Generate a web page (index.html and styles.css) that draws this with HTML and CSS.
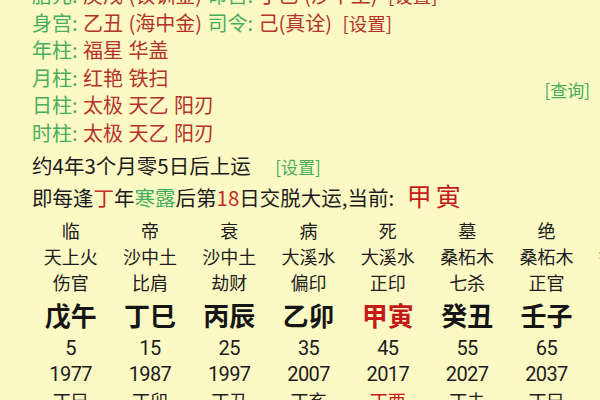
FILE: index.html
```html
<!DOCTYPE html>
<html lang="zh-CN">
<head>
<meta charset="utf-8">
<link rel="stylesheet" href="styles.css">
</head>
<body>
<div class="page">
  <section class="info">
    <div class="info-lines">
      <div class="line"><span class="lbl">胎元:</span> <span class="val">庚戌 (钗钏金)</span> <span class="lbl">命宫:</span> <span class="val">丁巳 (沙中土)</span> <span class="val set">[设置]</span></div>
      <div class="line"><span class="lbl">身宫:</span> <span class="val">乙丑 (海中金)</span> <span class="lbl">司令:</span> <span class="val">己(真诠)</span> <span class="val set">[设置]</span></div>
      <div class="line"><span class="lbl">年柱:</span> <span class="val">福星 华盖</span></div>
      <div class="line"><span class="lbl">月柱:</span> <span class="val">红艳 铁扫</span></div>
      <div class="line"><span class="lbl">日柱:</span> <span class="val">太极 天乙 阳刃</span></div>
      <div class="line"><span class="lbl">时柱:</span> <span class="val">太极 天乙 阳刃</span></div>
    </div>
    <div class="query">[查询]</div>
  </section>

  <section class="luck">
    <div class="lline">约4年3个月零5日后上运 <span class="gset">[设置]</span></div>
    <div class="lline">即每逢<span class="red">丁</span>年<span class="grn">寒露</span>后第<span class="red">18</span>日交脱大运,当前: <span class="cur">甲寅</span></div>
  </section>

  <section class="grid">
    <div>临</div><div>帝</div><div>衰</div><div>病</div><div>死</div><div>墓</div><div>绝</div><div>胎</div>
    <div>天上火</div><div>沙中土</div><div>沙中土</div><div>大溪水</div><div>大溪水</div><div>桑柘木</div><div>桑柘木</div><div>钗钏金</div>
    <div>伤官</div><div>比肩</div><div>劫财</div><div>偏印</div><div>正印</div><div>七杀</div><div>正官</div><div>偏财</div>
    <div class="gz">戊午</div><div class="gz">丁巳</div><div class="gz">丙辰</div><div class="gz">乙卯</div><div class="gz hot">甲寅</div><div class="gz">癸丑</div><div class="gz">壬子</div><div class="gz">辛亥</div>
    <div class="num">5</div><div class="num">15</div><div class="num">25</div><div class="num">35</div><div class="num">45</div><div class="num">55</div><div class="num">65</div><div class="num">75</div>
    <div class="num">1977</div><div class="num">1987</div><div class="num">1997</div><div class="num">2007</div><div class="num">2017</div><div class="num">2027</div><div class="num">2037</div><div class="num">2047</div>
    <div>丁巳</div><div>丁卯</div><div>丁丑</div><div>丁亥</div><div class="hot">丁酉</div><div>丁未</div><div>丁巳</div><div>丁卯</div>
  </section>
</div>
</body>
</html>
```

FILE: styles.css
```css
html, body {
  margin: 0;
  padding: 0;
}
body {
  width: 600px;
  height: 400px;
  overflow: hidden;
  background: #fcf9c5;
  font-family: "Noto Sans CJK SC", "Noto Sans", sans-serif;
  color: #1c1c1c;
}
.page {
  margin-top: -19px;
  padding-left: 32px;
  padding-right: 10px;
}
.info {
  display: flex;
  justify-content: space-between;
  align-items: flex-start;
}
.line {
  font-size: 20px;
  line-height: 27.5px;
  height: 27.5px;
  white-space: nowrap;
  word-spacing: 1px;
}
.line span,
.lline span {
  line-height: 1;
}
.lbl {
  color: #47ad5e;
}
.val {
  color: #b3322a;
}
.set {
  font-size: 18.5px;
  margin-left: 5px;
}
.query {
  color: #47ad5e;
  font-size: 17px;
  line-height: 22px;
  margin-top: 98px;
}
.luck {
  margin-top: 3px;
}
.lline {
  font-size: 20.5px;
  line-height: 32px;
  height: 32px;
  white-space: nowrap;
}
.gset {
  color: #47ad5e;
  font-size: 17px;
  margin-left: 20px;
}
.red {
  color: #c62a25;
}
.grn {
  color: #47ad5e;
}
.cur {
  color: #c41a1a;
  font-size: 25px;
  letter-spacing: 4px;
  margin-left: 8px;
}
.grid {
  margin-top: 4px;
  margin-left: -1px;
  display: grid;
  grid-template-columns: repeat(8, 79.3px);
  grid-template-rows: 26px 26px 26px 40px 26px 26px 26px;
  font-size: 18px;
  line-height: 1;
  white-space: nowrap;
}
.grid > div {
  display: flex;
  align-items: center;
  justify-content: center;
}
.gz {
  font-size: 26px;
  font-weight: bold;
  color: #151515;
}
.hot {
  color: #c41a1a;
}
.num {
  font-family: Roboto, "Noto Sans", sans-serif;
  font-size: 20px;
  letter-spacing: -0.6px;
}
```
